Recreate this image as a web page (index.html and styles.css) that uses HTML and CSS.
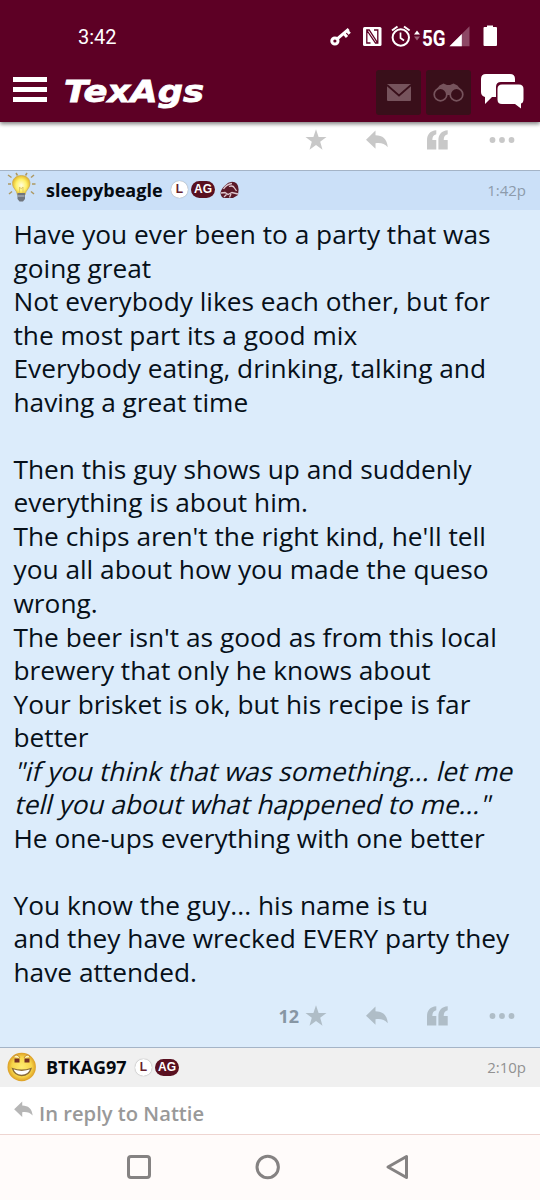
FILE: index.html
```html
<!DOCTYPE html>
<html lang="en">
<head>
<meta charset="utf-8">
<title>TexAgs</title>
<link rel="stylesheet" href="styles.css">
</head>
<body>
<svg class="defs" width="0" height="0">
  <symbol id="star" viewBox="0 0 22 22"><path d="M11 .3 13.600 8H21.500L15.200 12.700 17.500 20.700 11 16 4.500 20.700 6.800 12.700 .5 8H8.400Z"/></symbol>
  <symbol id="reply" viewBox="0 0 22 20"><path d="M9.500 .5V5.200C16.500 5.400 21 8.500 21.800 17.200 18.500 13.500 15 12.600 9.500 13.200V18.700L0 9.700Z"/></symbol>
  <symbol id="quote" viewBox="0 0 21 20"><path d="M9.300.2V4.200C6.600 4.700 5.400 6.500 5.300 10H9.300V19.500H0V10.500C0 4.200 3.200.6 9.300.2ZM20.700.2V4.200C18 4.700 16.800 6.500 16.700 10H20.700V19.500H11.400V10.500C11.400 4.200 14.600.6 20.700.2Z"/></symbol>
  <symbol id="dots" viewBox="0 0 26 8"><circle cx="3.500" cy="4" r="2.900"/><circle cx="13" cy="4" r="2.900"/><circle cx="22.500" cy="4" r="2.900"/></symbol>
</svg>
<div class="screen">
  <header class="top">
    <div class="status">
      <span class="clock">3:42</span>
      <svg class="tray" width="180" height="30" viewBox="325 22 180 30">
        <g fill="none" stroke="#fff">
          <circle cx="334.900" cy="41" r="3.100" stroke-width="3"/>
          <path d="M337.500 38.700 348.700 29.200M344 33.500 347 37M347.200 31 349.700 33.800" stroke-width="3"/>
          <circle cx="400.800" cy="37.500" r="8.200" stroke-width="2"/>
          <path d="M400.500 32.500V38L404 40.500" stroke-width="1.700"/>
          <path d="M392 30.500 397.500 26.500M404 26.500 409.600 30.500" stroke-width="2"/>
        </g>
        <rect x="363" y="27" width="18.500" height="19" rx="1.500" fill="#fff"/>
        <path d="M370.500 43H366.800V30H369.200L377.300 42.500V43M374 30H377.800V43H375.500L367 30.500" fill="none" stroke="#5d0025" stroke-width="1.300"/>
        <path d="M414 34.500 417 30.500 420 34.500Z" fill="#fff"/><path d="M414 36.500H420L417 40.500Z" fill="#9c6077"/>
        <text class="network" x="422" y="46.300" textLength="23.500" lengthAdjust="spacingAndGlyphs">5G</text>
        <path d="M449.500 46.300 469.500 26.300V46.300Z" fill="#8d4865"/><path d="M449.500 46.300 461.800 34V46.300Z" fill="#fff"/>
        <path d="M487 25.500H493V27H496Q497 27 497 28V45Q497 46 496 46H484.500Q483.500 46 483.500 45V28Q483.500 27 484.500 27H487Z" fill="#fff"/>
      </svg>
    </div>
    <div class="bar">
      <div class="menu"><i></i><i></i><i></i></div>
      <svg class="logo" width="146" height="38" viewBox="61 72 146 38"><text x="64" y="101.500" textLength="140" lengthAdjust="spacingAndGlyphs">TexAgs</text></svg>
      <div class="buttons">
        <div class="tile"><svg width="24" height="17" viewBox="0 0 24 17"><rect width="24" height="17" rx="1" fill="#76535c"/><path d="M0 1 12 11.500 24 1" fill="none" stroke="#390f1a" stroke-width="1.700"/></svg></div>
        <div class="tile"><svg width="31" height="19" viewBox="0 0 31 19"><path d="M1.500 9 6.500 2.500 10.500.5 14 2H17L20.500.5 24.500 2.500 29.500 9 20 12H11Z" fill="#76535c"/><g fill="#390f1a" stroke="#76535c" stroke-width="1.700"><circle cx="7.500" cy="11.500" r="6.300"/><circle cx="23.500" cy="11.500" r="6.300"/></g></svg></div>
        <svg class="chat" width="44" height="36" viewBox="0 0 44 36"><path d="M6 1H30Q35 1 35 6V9H21Q16 9 16 14V24H12L5 31V24Q1 23 1 19V6Q1 1 6 1Z"/><path d="M22 11.500H39Q43.500 11.500 43.500 16V26Q43.500 30 41 30.500V35.500L35 31H22Q17.500 31 17.500 26.500V16Q17.500 11.500 22 11.500Z"/></svg>
      </div>
    </div>
  </header>

  <div class="actions previous">
    <svg class="star"><use href="#star"/></svg><svg class="reply"><use href="#reply"/></svg><svg class="quote"><use href="#quote"/></svg><svg class="dots"><use href="#dots"/></svg>
  </div>

  <article class="post liked">
    <div class="author">
      <svg class="avatar" width="32" height="32" viewBox="5 170 32 32">
        <defs><radialGradient id="glow"><stop offset="0" stop-color="#fffde0"/><stop offset=".6" stop-color="#fff16a"/><stop offset="1" stop-color="#e4ba30"/></radialGradient></defs>
        <path d="M8 174 11.500 176.500M16 172 17.500 174.500M27 172 25.500 174.500M34 174 31 176.500M8 183H11M32 183H35.500M9 193 12 190.500M34 193 31 190.500" stroke="#ad9862" stroke-width="1.500"/>
        <path d="M21.300 174.500C26.500 174.500 30 178 30 182.500 30 187.500 25.500 189 25 194H17.500C17 189 12.500 187.500 12.500 182.500 12.500 178 16 174.500 21.300 174.500Z" fill="url(#glow)" stroke="#c9ad5c" stroke-width=".8"/>
        <path d="M19.500 193V186L21.300 188 23 186V193" fill="none" stroke="#dcc060" stroke-width=".8"/>
        <path d="M17.500 192H25V198L23 200.500H19.500L17.500 198Z" fill="#70757d"/><path d="M18 195H24.500" stroke="#bcc3ca"/>
      </svg>
      <b class="name sleepy">sleepybeagle</b>
      <span class="badge round">L</span><span class="badge ag">AG</span>
      <svg class="helmet" width="19" height="18" viewBox="0 0 19 18"><path d="M.5 12Q1 8 5 4.500 8 1 12 .7 18.500 1 18.600 8.500L18 14 13 17H4Q1 16.500.5 12Z" fill="#5b1928"/><path d="M3.500 8Q6 3.500 12 2.500M9 5.500Q13 4 14.500 7L16.500 10M1 12 5 11.500 8 13.500 12 11.500 18 13M4 16 6.500 13.500M9.500 16.500 11 13" fill="none" stroke="#dfc7ce" stroke-width="1.300"/></svg>
      <time>1:42p</time>
    </div>
    <div class="body">Have you ever been to a party that was<br>going great<br>Not everybody likes each other, but for<br>the most part its a good mix<br>Everybody eating, drinking, talking and<br>having a great time<br><br>Then this guy shows up and suddenly<br>everything is about him.<br>The chips aren't the right kind, he'll tell<br>you all about how you made the queso<br>wrong.<br>The beer isn't as good as from this local<br>brewery that only he knows about<br>Your brisket is ok, but his recipe is far<br>better<br><em>"if you think that was something... let me</em><br><em>tell you about what happened to me..."</em><br>He one-ups everything with one better<br><br>You know the guy... his name is tu<br>and they have wrecked EVERY party they<br>have attended.</div>
    <div class="actions">
      <b class="count">12</b><svg class="star"><use href="#star"/></svg><svg class="reply"><use href="#reply"/></svg><svg class="quote"><use href="#quote"/></svg><svg class="dots"><use href="#dots"/></svg>
    </div>
  </article>

  <article class="post plain">
    <div class="author">
      <svg class="avatar" width="32" height="32" viewBox="5 1048 32 32">
        <defs><radialGradient id="face"><stop offset="0" stop-color="#ffeb70"/><stop offset=".7" stop-color="#f7d448"/><stop offset="1" stop-color="#dc9e25"/></radialGradient></defs>
        <circle cx="21.700" cy="1065" r="14.200" fill="url(#face)"/>
        <path d="M13.500 1055Q17 1050.500 20 1056M24 1056Q27 1050.500 30 1055" fill="#fff4bb" stroke="#c1893a"/>
        <path d="M14.500 1056.500H19.500V1060.500H14.500ZM24.500 1056.500H29.500V1060.500H24.500Z" fill="#763023"/>
        <path d="M12.500 1066.500Q21.500 1070 31 1066.500 29 1073.500 21.500 1073.500 14.500 1073 12.500 1066.500Z" fill="#fff" stroke="#8a6b35" stroke-width="1.300"/>
      </svg>
      <b class="name btk">BTKAG97</b>
      <span class="badge round">L</span><span class="badge ag">AG</span>
      <time>2:10p</time>
    </div>
    <div class="context"><svg width="19" height="17"><use href="#reply"/></svg><span>In reply to Nattie</span></div>
  </article>

  <nav>
    <svg width="540" height="65" viewBox="0 1135 540 65" fill="none" stroke="#858282" stroke-width="3"><rect x="128.500" y="1156.500" width="21" height="21" rx="2.500"/><circle cx="267.700" cy="1167" r="10.700"/><path d="M406.500 1156.500V1177.500L388 1167Z" stroke-linejoin="round"/></svg>
  </nav>
</div>
</body>
</html>
```
FILE: styles.css
```css
* { box-sizing: border-box; }
body { margin: 0; background: #fff; font-family: "Open Sans", sans-serif; }
svg { display: block; flex: none; }
.defs { position: absolute; }
.screen { width: 540px; height: 1200px; display: flex; flex-direction: column; overflow: hidden; background: #fff; }
.top { height: 122px; flex: none; background: #5d0025; color: #fff; box-shadow: 0 2px 4px rgba(0,0,0,.5); z-index: 1; }
.status { height: 62px; display: flex; padding: 22px 35px 0 78px; justify-content: space-between; }
.clock { font: 400 20px/30px Roboto, sans-serif; }
.network { font: 700 22px Roboto, sans-serif; fill: #fff; }
.bar { height: 60px; padding: 6px 16px 0 13px; display: flex; align-items: flex-start; }
.menu { width: 34px; padding-top: 9px; display: flex; flex-direction: column; gap: 5px; margin-right: 14px; }
.menu i { height: 5px; background: #fff; }
.logo { margin-top: 4px; }
.logo text { font: italic 700 31px "DejaVu Sans", sans-serif; fill: #fff; stroke: #fff; stroke-width: .8px; }
.buttons { display: flex; margin-left: auto; gap: 5px; }
.tile { width: 45px; height: 45px; border-radius: 3px; background: #390f1a; display: grid; place-items: center; margin-top: 2px; }
.chat { fill: #fff; margin: 5px 0 0 4px; }
.actions { display: flex; align-items: center; justify-content: flex-end; padding-right: 25px; height: 36px; fill: #afbdc7; }
.actions.previous { height: 48px; padding-bottom: 12px; flex: none; fill: #c8c8c8; }
.star { width: 22px; height: 22px; margin-right: 38.500px; }
.reply { width: 22px; height: 20px; margin-right: 39.500px; }
.quote { width: 21px; height: 20px; margin-right: 41px; }
.dots { width: 26px; height: 8px; }
.count { font-size: 18px; color: #8796a4; margin-right: 6px; line-height: 24px; }
.post { flex: none; border-top: 1px solid #a4b4c7; }
.liked { height: 877px; background: #dcecfb; }
.author { height: 39px; display: flex; align-items: center; padding: 0 14px 2px 5px; background: #cbe0f8; }
.plain .author { background: #f0f0f0; height: 39px; padding-bottom: 1px; }
.avatar { margin: -6px 10px 0 0; }
.plain .avatar { margin-top: -3px; }
.name { font-size: 18px; line-height: 24px; color: #050a10; white-space: nowrap; margin-left: -1px; }
.sleepy { width: 116px; margin-right: 9px; }
.btk { width: 80px; margin-right: 9px; }
.badge { font: 700 12px/17px "Liberation Sans", sans-serif; height: 17px; text-align: center; }
.round { width: 17px; border-radius: 50%; background: #fff; color: #65212f; box-shadow: 0 0 1px #777; margin-right: 3px; }
.ag { width: 24px; border-radius: 9px; color: #fff; background: #591020; }
.helmet { margin-left: 5px; }
time { margin-left: auto; font-size: 15px; color: #8d9bab; }
.plain time { color: #929292; }
.body { height: 788px; padding: 8px 0 0 13.500px; color: #071019; font-size: 26.270px; line-height: 33.550px; white-space: nowrap; }
.body em { display: inline-block; font-style: normal; line-height: inherit; vertical-align: top; transform: skewX(-14deg); transform-origin: 0 75%; }
.context { height: 47px; display: flex; align-items: center; gap: 6px; padding: 4px 0 0 14px; color: #999; font-size: 20.200px; font-weight: 600; fill: #b6b6b6; }
.context svg { margin-top: -7px; }
nav { height: 66px; flex: none; background: #fffbfa; border-top: 1px solid #eed5d1; }
```
